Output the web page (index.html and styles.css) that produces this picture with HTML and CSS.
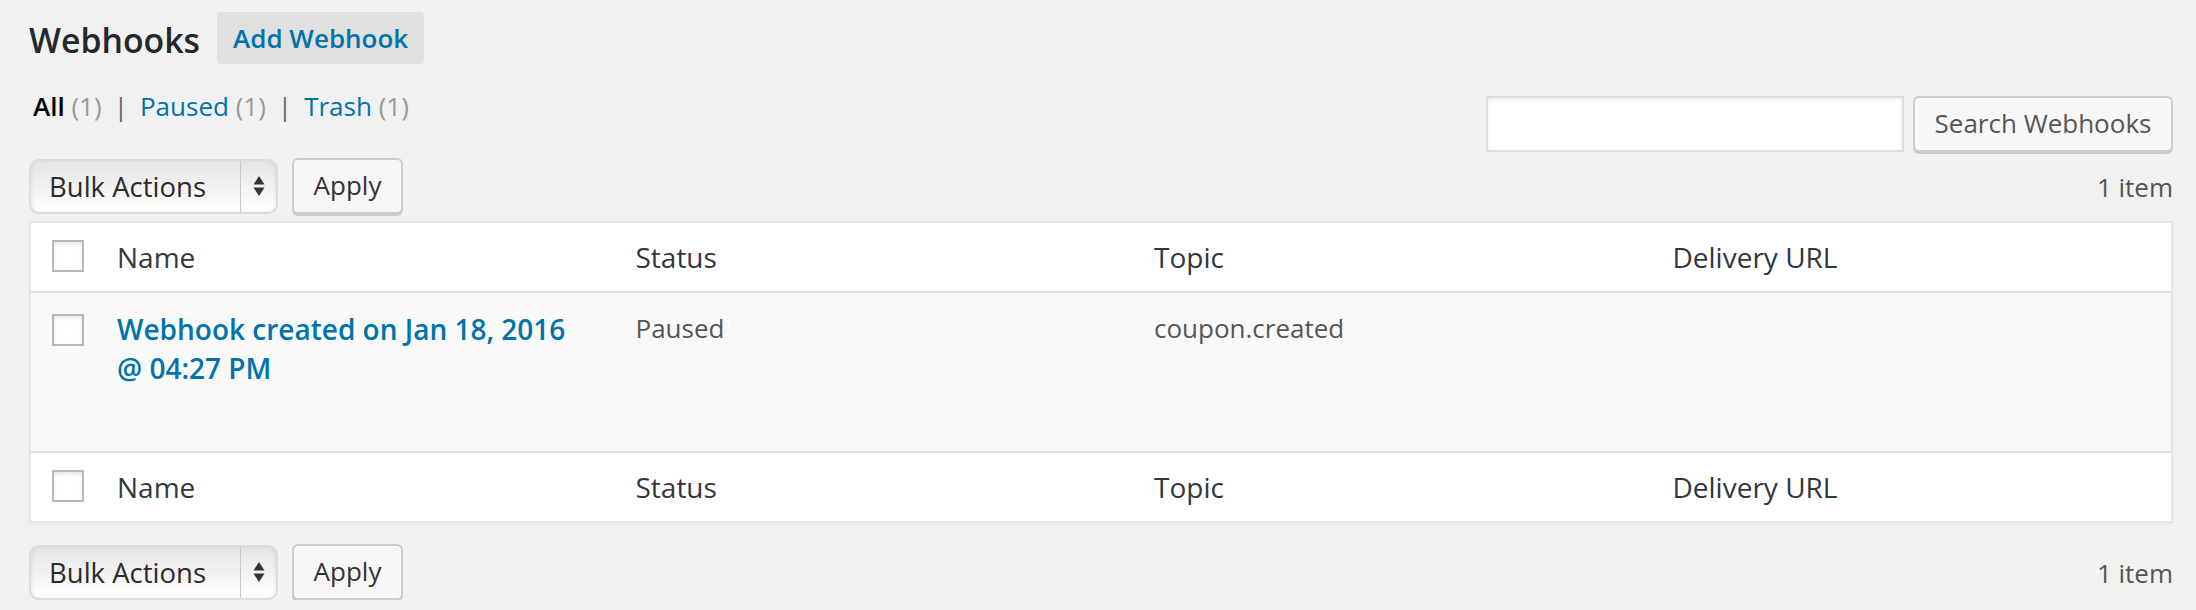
FILE: index.html
```html
<!DOCTYPE html>
<html lang="en">
<head>
<meta charset="utf-8">
<title>Webhooks</title>
<link rel="stylesheet" href="styles.css">
</head>
<body>
<div class="wrap">
  <div class="title-row">
    <h2 class="page-title">Webhooks</h2>
    <a class="add-new" href="#">Add Webhook</a>
  </div>

  <div class="filter-row">
    <ul class="subsubsub">
      <li><a class="current" href="#">All <span class="count">(1)</span></a><span class="sep">|</span></li>
      <li><a href="#">Paused <span class="count">(1)</span></a><span class="sep">|</span></li>
      <li><a href="#">Trash <span class="count">(1)</span></a></li>
    </ul>
    <div class="search-box">
      <input class="search-input" type="search" aria-label="Search Webhooks">
      <button class="btn btn-search">Search Webhooks</button>
    </div>
  </div>

  <div class="tablenav tablenav-top">
    <div class="bulk">
      <div class="select">
        <span class="select-label">Bulk Actions</span>
        <span class="select-arrows">
          <svg width="12" height="22" viewBox="0 0 12 22"><path d="M6 1 L11.5 9.5 H0.5 Z M6 21 L0.5 12.5 H11.5 Z" fill="#333"/></svg>
        </span>
      </div>
      <button class="btn btn-apply">Apply</button>
    </div>
    <div class="count-items">1 item</div>
  </div>

  <table class="list">
    <colgroup>
      <col class="col-check">
      <col><col><col><col>
    </colgroup>
    <thead>
      <tr>
        <td class="check"><span class="cb"></span></td>
        <th>Name</th>
        <th>Status</th>
        <th>Topic</th>
        <th>Delivery URL</th>
      </tr>
    </thead>
    <tbody>
      <tr>
        <th class="check"><span class="cb"></span></th>
        <td><a class="row-title" href="#">Webhook created on Jan 18, 2016 @ 04:27 PM</a><div class="row-actions"></div></td>
        <td>Paused</td>
        <td>coupon.created</td>
        <td></td>
      </tr>
    </tbody>
    <tfoot>
      <tr>
        <td class="check"><span class="cb"></span></td>
        <th>Name</th>
        <th>Status</th>
        <th>Topic</th>
        <th>Delivery URL</th>
      </tr>
    </tfoot>
  </table>

  <div class="tablenav tablenav-bottom">
    <div class="bulk">
      <div class="select">
        <span class="select-label">Bulk Actions</span>
        <span class="select-arrows">
          <svg width="12" height="22" viewBox="0 0 12 22"><path d="M6 1 L11.5 9.5 H0.5 Z M6 21 L0.5 12.5 H11.5 Z" fill="#333"/></svg>
        </span>
      </div>
      <button class="btn btn-apply">Apply</button>
    </div>
    <div class="count-items">1 item</div>
  </div>
</div>
</body>
</html>
```

FILE: styles.css
```css
* { box-sizing: border-box; }

html, body {
  margin: 0;
  padding: 0;
  background: #f1f1f1;
}

body {
  font-family: "Open Sans", "Liberation Sans", sans-serif;
  color: #444;
  font-size: 26px;
}

.wrap {
  padding: 12px 23px 0 29px;
}

/* title */
.title-row {
  display: flex;
  align-items: flex-start;
  gap: 17px;
  height: 56px;
}

.page-title {
  margin: 0;
  font-size: 33.8px;
  line-height: 56px;
  font-weight: 600;
  color: #23282d;
}

.add-new {
  display: block;
  height: 52px;
  line-height: 52px;
  padding: 0 16px;
  background: #e0e0e0;
  border-radius: 4px;
  color: #0073aa;
  font-weight: 600;
  font-size: 26px;
  text-decoration: none;
}

/* filter row */
.filter-row {
  display: flex;
  justify-content: space-between;
  align-items: flex-start;
  height: 84px;
}

.subsubsub {
  list-style: none;
  margin: 20px 0 0 4px;
  padding: 0;
  display: flex;
  font-size: 26px;
  line-height: 36px;
}

.subsubsub a {
  color: #0073aa;
  text-decoration: none;
}

.subsubsub a.current {
  color: #000;
  font-weight: 600;
}

.subsubsub .count {
  color: #999;
  font-weight: 400;
}

.subsubsub .sep {
  color: #666;
  margin: 0 12px;
}

.search-box {
  display: flex;
  gap: 9px;
  margin-top: 28px;
}

.search-input {
  width: 418px;
  height: 56px;
  border: 2px solid #ddd;
  background: #fff;
  box-shadow: inset 0 2px 4px rgba(0, 0, 0, 0.07);
  margin: 0;
  padding: 0 8px;
  font-family: inherit;
  font-size: 26px;
  outline: none;
}

.btn {
  height: 56px;
  margin: 0;
  padding: 0 16px 2px;
  border: 2px solid #ccc;
  border-radius: 6px;
  background: #f7f7f7;
  box-shadow: 0 2px 0 #ccc;
  color: #555;
  font-family: inherit;
  font-size: 26px;
  line-height: 50px;
  white-space: nowrap;
}

.btn-search {
  width: 260px;
  padding: 0 0 2px;
  text-align: center;
}

/* tablenav */
.tablenav {
  display: flex;
  justify-content: space-between;
  align-items: center;
  height: 56px;
}

.tablenav-top {
  margin-top: 6px;
  margin-bottom: 7px;
}

.tablenav-bottom {
  margin-top: 21px;
}

.bulk {
  display: flex;
  align-items: center;
  gap: 14px;
}

.select {
  display: flex;
  align-items: stretch;
  width: 249px;
  height: 55px;
  border: 2px solid #dcdcdc;
  border-radius: 10px;
  background: linear-gradient(to bottom, #e4e4e4 0%, #f0f0f0 45%, #fcfcfc 85%, #fff 100%);
  box-shadow: inset 3px 0 4px -2px rgba(0, 0, 0, 0.07), inset -3px 0 4px -2px rgba(0, 0, 0, 0.07);
  color: #2b2b2b;
}

.select-label {
  flex: 1;
  padding-left: 18px;
  line-height: 51px;
  font-size: 27.5px;
  white-space: nowrap;
}

.select-arrows {
  width: 36px;
  border-left: 1px solid #c8c8c8;
  display: flex;
  align-items: center;
  justify-content: center;
}

.btn-apply {
  width: 111px;
  padding: 0 0 2px;
  color: #333;
}

.count-items {
  font-size: 26px;
  line-height: 36px;
  color: #555;
  margin-top: 2px;
}

/* table */
.list {
  width: 100%;
  border-collapse: separate;
  border-spacing: 0;
  table-layout: fixed;
  background: #fff;
  border: 2px solid #e5e5e5;
  box-shadow: 0 2px 2px rgba(0, 0, 0, 0.04);
}

.col-check {
  width: 66px;
}

.list th,
.list td {
  text-align: left;
  vertical-align: top;
}

.list thead th,
.list tfoot th {
  font-size: 28px;
  font-weight: 400;
  line-height: 39px;
  color: #32373c;
  padding: 15px 20px 14px;
}

.list thead th,
.list thead td {
  border-bottom: 2px solid #e1e1e1;
}

.list tfoot th,
.list tfoot td {
  border-top: 2px solid #e1e1e1;
}

.list td.check,
.list th.check {
  padding: 17px 0 0 21px;
}

.list tbody th.check {
  padding-top: 21px;
}

.list tbody tr {
  background: #f9f9f9;
}

.list tbody td {
  padding: 17px 20px 16px;
  font-size: 26px;
  line-height: 36px;
  color: #555;
}

.cb {
  display: block;
  width: 32px;
  height: 32px;
  border: 2px solid #b4b9be;
  background: #fff;
  box-shadow: inset 0 2px 4px rgba(0, 0, 0, 0.1);
}

.row-title {
  font-size: 28px;
  line-height: 39px;
  font-weight: 600;
  color: #0073aa;
  text-decoration: none;
  display: block;
  padding-right: 10px;
}

.row-actions {
  height: 47px;
}
```
